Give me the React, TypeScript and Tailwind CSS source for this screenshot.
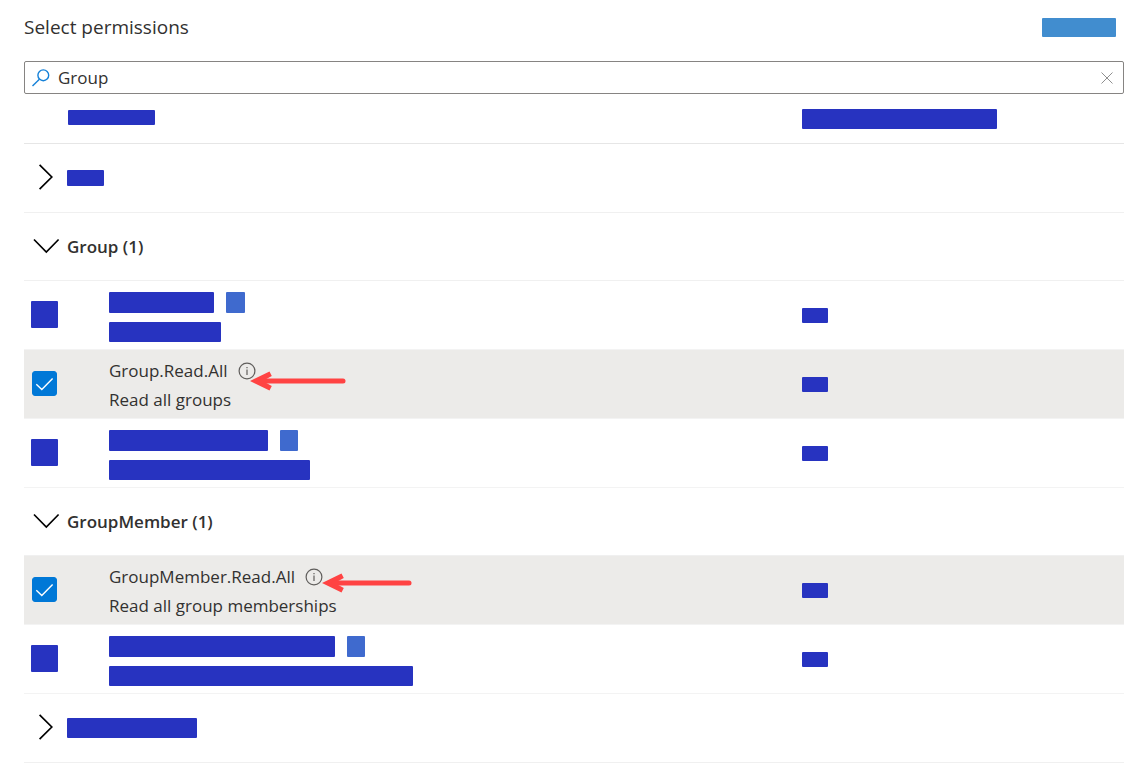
import { useState } from "react";

type Permission = {
  id: string;
  name?: string;
  description?: string;
  nameBar?: string;
  badgeBar?: string;
  descriptionBar?: string;
  arrow?: string;
  arrowLength?: number;
};

type Group = { id: string; title?: string; bar?: string; open: boolean; permissions: Permission[] };

const GROUPS: Group[] = [
  { id: "g0", bar: "h-4 w-[37px]", open: false, permissions: [] },
  {
    id: "g1",
    title: "Group (1)",
    open: true,
    permissions: [
      { id: "p1", nameBar: "w-[105px]", badgeBar: "w-[19px]", descriptionBar: "w-[112px]" },
      {
        id: "p2",
        name: "Group.Read.All",
        description: "Read all groups",
        arrow: "left-3 top-[9px]",
        arrowLength: 96,
      },
      { id: "p3", nameBar: "w-[159px]", badgeBar: "w-[18px]", descriptionBar: "w-[201px]" },
    ],
  },
  {
    id: "g2",
    title: "GroupMember (1)",
    open: true,
    permissions: [
      {
        id: "p4",
        name: "GroupMember.Read.All",
        description: "Read all group memberships",
        arrow: "left-[17px] top-[5px]",
        arrowLength: 90,
      },
      { id: "p5", nameBar: "w-[226px]", badgeBar: "w-[18px]", descriptionBar: "w-[304px]" },
    ],
  },
  { id: "g3", bar: "h-5 w-[130px]", open: false, permissions: [] },
];

function Chevron({ open }: { open: boolean }) {
  return (
    <svg
      width="28"
      height="28"
      viewBox="0 0 28 28"
      fill="none"
      stroke="#000"
      strokeWidth="1.7"
      className="mb-0.5 shrink-0"
      aria-hidden="true"
    >
      <path d={open ? "M2 7.5 14.3 20 26.6 7.5" : "M7.6 1.8 19.8 14 7.6 26.2"} />
    </svg>
  );
}

function InfoIcon() {
  return (
    <svg width="18" height="18" viewBox="0 0 18 18" fill="none" stroke="#605e5c" aria-hidden="true">
      <circle cx="9" cy="9" r="7.9" strokeWidth="1.2" />
      <path d="M9 7.5v5.5M9 4.9v1.4" strokeWidth="1.2" />
    </svg>
  );
}

function Arrow({ length, place }: { length: number; place: string }) {
  return (
    <svg
      width={length}
      height="20"
      viewBox={`0 0 ${length} 20`}
      className={`pointer-events-none absolute max-w-none ${place}`}
      aria-hidden="true"
    >
      <path d="M0 10 L19.5 0.4 L21.8 5 L14.5 9 L14.5 11 L21.8 15 L19.5 19.6 Z" fill="#ff4343" />
      <path d={`M12 10H${length - 3}`} stroke="#ff4343" strokeWidth="5" strokeLinecap="round" />
    </svg>
  );
}

function GroupRow({ group }: { group: Group }) {
  return (
    <tr>
      <th
        colSpan={3}
        scope="rowgroup"
        className={`border-b border-[#f0f0f0] pl-2 text-left font-semibold ${group.title ? "h-[68px]" : "h-[69px]"}`}
      >
        <button type="button" aria-expanded={group.open} className="flex items-center gap-[7px]">
          <Chevron open={group.open} />
          {group.title ? (
            <span className="text-[17px] leading-6">{group.title}</span>
          ) : (
            <span className={`rounded-[1px] bg-[#2733c0] ${group.bar}`} />
          )}
        </button>
      </th>
    </tr>
  );
}

function PermissionRow({ permission: p }: { permission: Permission }) {
  const [checked, setChecked] = useState(Boolean(p.name));
  const cell = `h-[69px] border-b border-[#f3f3f3] bg-clip-padding px-0 ${p.name ? "bg-[#ecebe9]" : "bg-white"}`;
  return (
    <tr>
      <td className={cell}>
        <div className="pb-0.5 pl-[7px]">
          {p.name ? (
            <span className="relative ml-px block size-[25px]">
              <input
                id={p.id}
                type="checkbox"
                checked={checked}
                onChange={(e) => setChecked(e.target.checked)}
                className="peer block size-[25px] appearance-none rounded-[3px] border border-[#0078d7] checked:bg-[#0078d7]"
              />
              <svg
                width="25"
                height="25"
                viewBox="0 0 25 25"
                fill="none"
                stroke="#fff"
                strokeWidth="1.4"
                className="pointer-events-none absolute inset-0 hidden peer-checked:block"
                aria-hidden="true"
              >
                <path d="M4.3 13.2 9.8 18.4 20.6 7.4" />
              </svg>
            </span>
          ) : (
            <input
              id={p.id}
              type="checkbox"
              aria-label="Permission"
              className="block size-[27px] appearance-none rounded-[1px] bg-[#2733c0]"
            />
          )}
        </div>
      </td>
      <td className={cell}>
        <div className="flex flex-col gap-[9px] pt-[3px]">
          {p.name ? (
            <>
              <div className="flex h-5 items-center gap-2.5">
                <label htmlFor={p.id} className="text-[17px] leading-5">
                  {p.name}
                </label>
                <span className="relative">
                  <InfoIcon />
                  <Arrow length={p.arrowLength ?? 90} place={p.arrow ?? ""} />
                </span>
              </div>
              <p className="h-5 text-[17px] leading-5">{p.description}</p>
            </>
          ) : (
            <>
              <div className="flex h-[21px] gap-3">
                <span className={`rounded-[1px] bg-[#2733c0] ${p.nameBar}`} />
                <span className={`rounded-[1px] bg-[#3f6ace] ${p.badgeBar}`} />
              </div>
              <div className={`h-5 rounded-[1px] bg-[#2733c0] ${p.descriptionBar}`} />
            </>
          )}
        </div>
      </td>
      <td className={cell}>
        <span className="block h-[15px] w-[26px] rounded-[1px] bg-[#2733c0]" />
      </td>
    </tr>
  );
}

export default function App() {
  const [query, setQuery] = useState("Group");
  return (
    <main className="bg-white pr-[14px] pl-6 font-['Open_Sans','Noto_Sans',sans-serif] text-[#323130]">
      <header className="flex items-center justify-between pt-[11px] pr-2 pb-[17px]">
        <h1 className="text-[19px] leading-[33px]">Select permissions</h1>
        <button type="button" aria-label="Expand all" className="h-[19px] w-[74px] rounded-[1px] bg-[#418dcf]" />
      </header>

      <div className="flex h-[33px] items-center gap-2 rounded-xs border border-[#868482] pr-[9px] pl-[7px]">
        <svg
          width="18"
          height="18"
          viewBox="0 0 18 18"
          fill="none"
          stroke="#1581d8"
          strokeWidth="1.4"
          className="shrink-0"
          aria-hidden="true"
        >
          <circle cx="11.3" cy="6.3" r="5.4" />
          <path d="M7.4 10.2 0.5 17.1" />
        </svg>
        <input
          type="text"
          aria-label="Search permissions"
          value={query}
          onChange={(e) => setQuery(e.target.value)}
          className="h-7 min-w-0 grow bg-transparent text-[17px] outline-none"
        />
        <button type="button" aria-label="Clear search" onClick={() => setQuery("")} className="p-px">
          <svg width="12" height="12" viewBox="0 0 12 12" stroke="#8f8f8f" strokeWidth="1" aria-hidden="true">
            <path d="M0.5 0.5 11.5 11.5M11.5 0.5 0.5 11.5" />
          </svg>
        </button>
      </div>

      <table className="w-full table-fixed border-separate border-spacing-0">
        <colgroup>
          <col className="w-[85px]" />
          <col />
          <col className="w-[322px]" />
        </colgroup>
        <thead>
          <tr>
            <th colSpan={2} scope="col" className="h-[50px] border-b border-[#e6e6e6] p-0 pb-0.5 pl-11">
              <span className="block h-[15px] w-[87px] rounded-[1px] bg-[#2733c0]" />
            </th>
            <th scope="col" className="h-[50px] border-b border-[#e6e6e6] p-0">
              <span className="block h-5 w-[195px] rounded-[1px] bg-[#2733c0]" />
            </th>
          </tr>
        </thead>
        {GROUPS.map((g) => (
          <tbody key={g.id}>
            <GroupRow group={g} />
            {g.permissions.map((p) => (
              <PermissionRow key={p.id} permission={p} />
            ))}
          </tbody>
        ))}
      </table>
    </main>
  );
}
